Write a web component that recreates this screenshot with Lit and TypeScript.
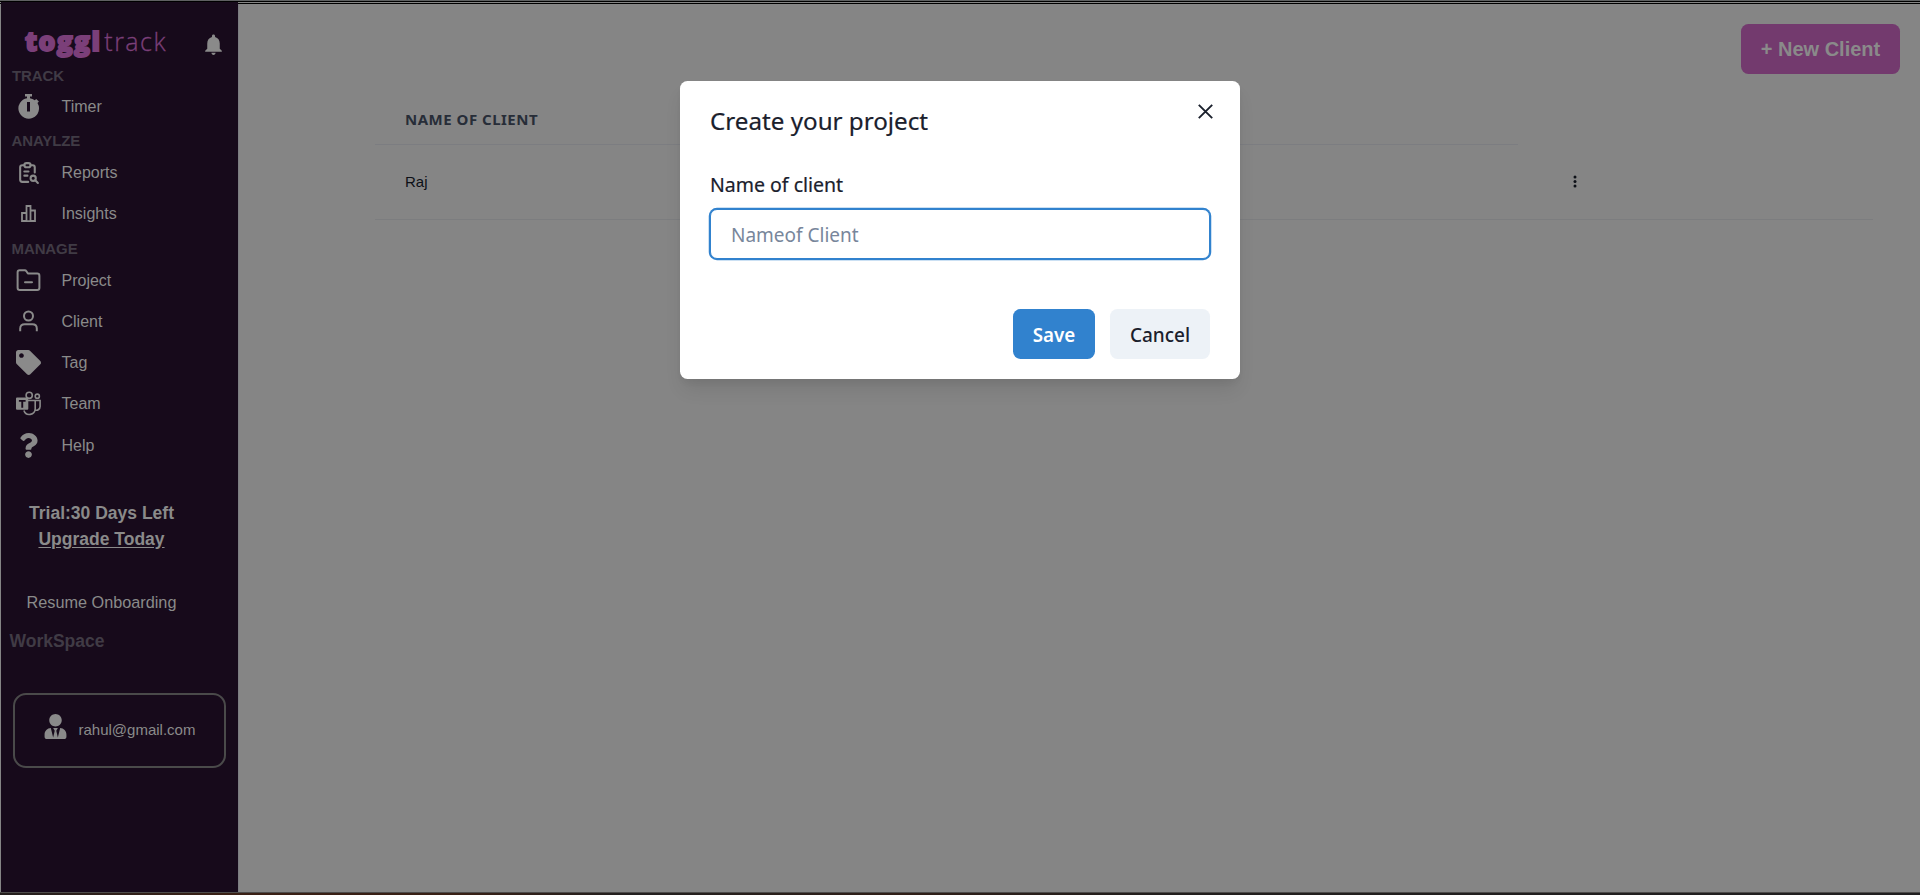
import { LitElement, html, css, svg } from "lit";
import { customElement, property } from "lit/decorators.js";

const icons: Record<string, unknown> = {
  bell: svg`<svg viewBox="0 0 24 24"><path fill="currentColor" d="M12 22c1.1 0 2-.9 2-2h-4c0 1.1.89 2 2 2zm6-6v-5c0-3.07-1.64-5.64-4.5-6.32V4c0-.83-.67-1.5-1.5-1.5s-1.5.67-1.5 1.5v.68C7.63 5.36 6 7.92 6 11v5l-2 2v1h16v-1l-2-2z"/></svg>`,
  timer: svg`<svg viewBox="0 0 25 25"><path fill="currentColor" fill-rule="evenodd" d="M9 0h7v2.6h-2v1.6a10.3 10.3 0 0 1 4.8 2L20.2 5l2.7 2.6-1.4 1.4A10.3 10.3 0 1 1 11 4.2V2.6H9zM11 8v9.5h3V8z"/></svg>`,
  reports: svg`<svg viewBox="0 0 24 24" fill="none" stroke="currentColor" stroke-width="2" stroke-linecap="round" stroke-linejoin="round"><path d="M8 5H6a2 2 0 0 0-2 2v12a2 2 0 0 0 2 2h5.7M18 12V7a2 2 0 0 0-2-2h-2M8 11h4M8 15h3M18.5 19.5 21 22"/><rect x="8" y="3" width="6" height="4" rx="2"/><circle cx="16.5" cy="17.5" r="2.5"/></svg>`,
  insights: svg`<svg viewBox="0 0 25 25" fill="none" stroke="currentColor" stroke-width="1.8"><path d="M6 20v-8h4.500v8zM10.500 20V5h4v15M14.500 20V9.500H19V20zM5.200 20.100h14.600"/></svg>`,
  project: svg`<svg viewBox="0 0 25 25" fill="none" stroke="currentColor" stroke-width="2" stroke-linejoin="round" stroke-linecap="round"><path d="M3.600 2.300h5.200c.7 0 1.200.3 1.600.9l1.500 2.300h9.300c1.400 0 2.200.8 2.200 2.200v12.100c0 1.400-.8 2.200-2.200 2.200H3.800c-1.400 0-2.200-.8-2.200-2.200V4.300c0-1.200.8-2 2-2zM9 14.300h7"/></svg>`,
  client: svg`<svg viewBox="0 0 25 25" fill="none" stroke="currentColor" stroke-width="2" stroke-linecap="square"><circle cx="12.500" cy="7" r="4.500"/><path d="M4.200 21.200v-1.700c0-2.800 1.700-4.300 4.500-4.300h7.600c2.800 0 4.500 1.500 4.500 4.300v1.700"/></svg>`,
  tag: svg`<svg viewBox="0 0 512 512"><path fill="currentColor" d="M0 252.118V48C0 21.49 21.49 0 48 0h204.118a48 48 0 0 1 33.941 14.059l211.882 211.882c18.745 18.745 18.745 49.137 0 67.882L293.823 497.941c-18.745 18.745-49.137 18.745-67.882 0L14.059 286.059A48 48 0 0 1 0 252.118zM112 64c-26.51 0-48 21.49-48 48s21.49 48 48 48 48-21.49 48-48-21.49-48-48-48z"/></svg>`,
  team: svg`<svg viewBox="0 0 25 25" fill="none" stroke="currentColor" stroke-width="1.600"><circle cx="13.200" cy="4.300" r="3.100"/><circle cx="21.300" cy="5.200" r="2.100"/><path d="M12 9.500h7.200v8.300a5.800 5.800 0 0 1-11.300 1.700M19.200 9.500h4.900v6a3.700 3.700 0 0 1-4.900 3.500"/><path fill="currentColor" stroke="none" fill-rule="evenodd" d="M1 6.500h10.300q1 0 1 1v10.300q0 1-1 1H1q-1 0-1-1V7.500q0-1 1-1zM2.900 9v1.700h2.400v6h1.900v-6h2.400V9z"/></svg>`,
  help: svg`<svg viewBox="0 0 384 512"><path fill="currentColor" d="M202.021 0C122.202 0 70.503 32.703 29.914 91.026c-7.363 10.58-5.093 25.086 5.178 32.874l43.138 32.709c10.373 7.865 25.132 6.026 33.253-4.148 25.049-31.381 43.63-49.449 82.757-49.449 30.764 0 68.816 19.799 68.816 49.631 0 22.552-18.617 34.134-48.993 51.164-35.423 19.86-82.299 44.576-82.299 106.405V320c0 13.255 10.745 24 24 24h72.471c13.255 0 24-10.745 24-24v-5.773c0-42.86 125.268-44.645 125.268-160.627C377.504 66.256 286.902 0 202.021 0zM192 373.459c-38.196 0-69.271 31.075-69.271 69.271 0 38.195 31.075 69.27 69.271 69.27s69.271-31.075 69.271-69.271-31.075-69.27-69.271-69.27z"/></svg>`,
  user: svg`<svg viewBox="0 0 448 512"><path fill="currentColor" d="M224 256c70.7 0 128-57.3 128-128S294.7 0 224 0 96 57.3 96 128s57.3 128 128 128zm95.8 32.6L272 480l-32-136 32-56h-96l32 56-32 136-47.8-191.4C56.9 292 0 350.3 0 422.4V464c0 26.500 21.500 48 48 48h352c26.500 0 48-21.500 48-48v-41.600c0-72.100-56.900-130.400-128.200-133.800z"/></svg>`,
  dots: svg`<svg viewBox="0 0 4 13"><g fill="currentColor"><circle cx="2" cy="2" r="1.500"/><circle cx="2" cy="6.500" r="1.500"/><circle cx="2" cy="11" r="1.500"/></g></svg>`,
  close: svg`<svg viewBox="0 0 15 15"><path d="M.8.8l13.400 13.400M14.200.8L.8 14.200" fill="none" stroke="currentColor" stroke-width="1.900"/></svg>`,
};

@customElement("ui-icon")
export class UiIcon extends LitElement {
  @property() name = "";
  static styles = css`
    :host { display: block; width: 25px; height: 25px; flex: none; }
    svg { display: block; width: 100%; height: 100%; }
  `;
  render() {
    return icons[this.name];
  }
}

const menu = [
  { title: "TRACK", cls: "first", items: [["timer", "Timer"]] },
  { title: "ANAYLZE", cls: "", items: [["reports", "Reports"], ["insights", "Insights"]] },
  {
    title: "MANAGE",
    cls: "last",
    items: [["project", "Project"], ["client", "Client"], ["tag", "Tag"], ["team", "Team"], ["help", "Help"]],
  },
];

@customElement("side-bar")
export class SideBar extends LitElement {
  static styles = css`
    :host {
      display: flex; flex-direction: column; box-sizing: border-box;
      width: 237px; flex: none; margin-top: -2px; background: #170a1b;
      color: #8a8a8a; font-family: "Liberation Sans", Arial, sans-serif;
    }
    .head { display: flex; height: 62px; padding: 0 12px 0 24px; justify-content: space-between; }
    .logo { display: flex; align-items: baseline; color: #7b3f79; height: 40px; margin-top: 19px; line-height: 40px; white-space: nowrap; }
    .bold { font: 800 26.5px/40px "Open Sans", sans-serif; letter-spacing: 1.3px; -webkit-text-stroke: 1.8px #7b3f79; }
    .thin { font: 300 25px/40px "Open Sans", sans-serif; letter-spacing: 1.5px; margin-left: 3px; -webkit-text-stroke: 0.3px #7b3f79; }
    .bell { width: 25px; height: 25px; margin-top: 30px; }
    .title { height: 25px; padding-left: 10.5px; font-size: 15px; line-height: 27px; font-weight: 700; letter-spacing: -0.1px; color: #403b45; }
    .title.first { height: 22px; padding-left: 11px; line-height: 23px; }
    .title.last { height: 26px; line-height: 29px; }
    .item { display: flex; align-items: center; height: 41px; padding-left: 15px; gap: 20.5px; font-size: 16px; }
    .item.help { padding-top: 1px; }
    .trial { margin: 33.5px 36px 0 0; text-align: center; font-size: 17.5px; line-height: 26px; font-weight: 700; }
    .up { text-decoration: underline; text-underline-offset: 2px; }
    .resume { margin: 37.5px 0 0 25.500px; font-size: 16.25px; line-height: 26px; }
    .work { margin: 13px 0 0 8.5px; font-size: 17.500px; line-height: 26px; font-weight: 700; color: #403b45; }
    .user { box-sizing: border-box; margin: 39px 0 0 12px; width: 213px; height: 75px; border: 2px solid #4a4a4a; border-radius: 13px; display: flex; align-items: center; padding-left: 28px; gap: 10.500px; font-size: 15px; padding-bottom: 2px; }
    .user ui-icon { margin-bottom: 6px; }
  `;
  render() {
    return html`
      <div class="head">
        <div class="logo"><span class="bold">toggl</span><span class="thin">track</span></div>
        <ui-icon class="bell" name="bell"></ui-icon>
      </div>
      ${menu.map(
        (s) => html`
          <div class="title ${s.cls}">${s.title}</div>
          ${s.items.map(([icon, label]) => html`<div class="item ${icon}"><ui-icon name=${icon}></ui-icon><span>${label}</span></div>`)}
        `
      )}
      <div class="trial">Trial:30 Days Left<br /><span class="up">Upgrade Today</span></div>
      <div class="resume">Resume Onboarding</div>
      <div class="work">WorkSpace</div>
      <div class="user"><ui-icon name="user"></ui-icon><span>rahul@gmail.com</span></div>
    `;
  }
}

@customElement("client-modal")
export class ClientModal extends LitElement {
  static styles = css`
    :host {
      position: absolute; left: 680px; top: 81px; width: 560px; height: 298px; box-sizing: border-box;
      padding: 0 30px; background: #fff; border-radius: 7.5px; color: #1a202c;
      font-family: "Noto Sans", "Open Sans", sans-serif;
      box-shadow: 0 12.5px 19px -4px rgba(0, 0, 0, 0.1), 0 5px 7.5px -2px rgba(0, 0, 0, 0.05);
    }
    .top { display: flex; justify-content: space-between; height: 89px; }
    h2 { margin: 20px 0 0; font-size: 24.2px; line-height: 40px; font-weight: 400; -webkit-text-stroke: 0.2px; }
    .close { width: 15px; height: 15px; margin: 23px -3px 0 0; }
    label { display: block; height: 39px; font-size: 19.5px; line-height: 30px; -webkit-text-stroke: 0.2px; }
    input {
      display: block; box-sizing: border-box; width: 500px; height: 50px; padding: 2px 20px 0; outline: none;
      border: 1px solid #3182ce; box-shadow: 0 0 0 1.25px #3182ce; border-radius: 7px; font: 19px "Noto Sans", sans-serif;
    }
    input::placeholder { color: #718096; opacity: 0.95; }
    .foot { display: flex; justify-content: flex-end; gap: 15px; margin-top: 50px; }
    button { border: 0; padding: 2px 0 0; height: 50px; border-radius: 7.5px; font: 600 18.8px "Noto Sans", sans-serif; }
    .save { width: 82px; background: #3182ce; color: #fff; }
    .cancel { width: 100px; background: #edf2f7; color: #1a202c; font-weight: 500; font-size: 19px; }
  `;
  render() {
    return html`
      <div class="top"><h2>Create your project</h2><ui-icon class="close" name="close"></ui-icon></div>
      <label for="n">Name of client</label>
      <input id="n" placeholder="Nameof Client" />
      <div class="foot"><button class="save">Save</button><button class="cancel">Cancel</button></div>
    `;
  }
}

@customElement("app-root")
export class AppRoot extends LitElement {
  static styles = css`
    :host {
      display: flex; flex-direction: column; position: relative; width: 1920px; height: 895px;
      overflow: hidden; background: #858585; box-sizing: border-box;
    }
    .edge { height: 4px; flex: none; background: linear-gradient(#5f6162 0 1px, #000 1px 2px, #858585 2px 3px, #000 3px); }
    .body { display: flex; flex: 1; padding-left: 1px; min-height: 0; }
    main { flex: 1; display: flex; flex-direction: column; border-left: 1px solid #7b7c81; }
    .bar { display: flex; justify-content: flex-end; padding: 20px 20px 0 0; height: 70px; box-sizing: border-box; }
    .new { border: 0; padding: 0; width: 159px; height: 50px; border-radius: 7.5px; background: #733a6e; color: #8a8a8a; font: 700 20px "Liberation Sans", sans-serif; }
    .table { margin: 22px 47px 0 136px; }
    .th { box-sizing: border-box; width: 1143px; height: 49px; padding: 10px 0 0 30px; border-bottom: 1px solid #7c7d81; color: #272d38; font: 700 15px/26px "Noto Sans", sans-serif; letter-spacing: 0.5px; }
    .tr { box-sizing: border-box; height: 75px; padding: 0 0 2px 30px; border-bottom: 1px solid #7c7d7f; display: flex; align-items: center; color: #0d1017; font: 15px "Liberation Sans", sans-serif; }
    .name { width: 1168px; }
    .dots { width: 4px; height: 13px; }
    .base { height: 3px; flex: none; background: linear-gradient(#4d4b4a 0 1px, transparent 1px), linear-gradient(90deg, #241f1e, #3a2015 12%, #381f15 24%, #221f1f 33%, #301e17 47%, #221e1d 60%, #201e1f); }
  `;
  render() {
    return html`
      <div class="edge"></div>
      <div class="body">
        <side-bar></side-bar>
        <main>
          <div class="bar"><button class="new">+ New Client</button></div>
          <div class="table">
            <div class="th">NAME OF CLIENT</div>
            <div class="tr"><span class="name">Raj</span><ui-icon class="dots" name="dots"></ui-icon></div>
          </div>
        </main>
      </div>
      <div class="base"></div>
      <client-modal></client-modal>
    `;
  }
}
